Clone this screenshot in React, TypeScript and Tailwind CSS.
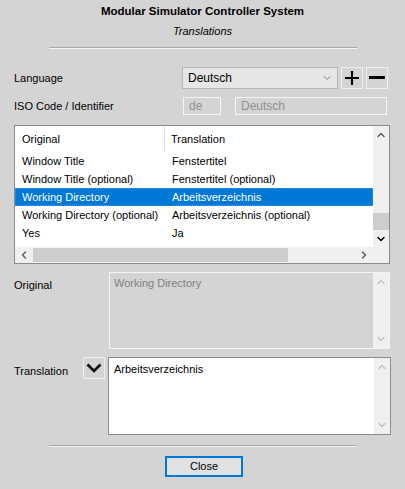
import { ChevronDown, ChevronUp, ChevronLeft, ChevronRight } from 'lucide-react'

const rows = [
  { original: 'Window Title', translation: 'Fenstertitel' },
  { original: 'Window Title (optional)', translation: 'Fenstertitel (optional)' },
  { original: 'Working Directory', translation: 'Arbeitsverzeichnis', selected: true },
  { original: 'Working Directory (optional)', translation: 'Arbeitsverzeichnis (optional)' },
  { original: 'Yes', translation: 'Ja' },
]

function Separator() {
  return <div className="mx-auto w-[308px] border-t border-[#a8a8a8] border-b border-b-[#f4f4f4]" />
}

function TextScroll() {
  return (
    <div className="flex w-[16px] flex-col items-center justify-between bg-[#f0f0f0] py-[3px]">
      <ChevronUp className="h-3 w-3 text-[#c0c0c0]" strokeWidth={2.5} />
      <ChevronDown className="h-3 w-3 text-[#c0c0c0]" strokeWidth={2.5} />
    </div>
  )
}

export default function App() {
  return (
    <div
      className="relative h-[489px] w-[405px] overflow-hidden bg-[#d4d4d4] text-[11px] text-black"
      style={{ fontFamily: '"Liberation Sans", Arial, sans-serif' }}
    >
      {/* Header */}
      <div className="pt-[4px] text-center text-[11.5px] font-bold leading-[14px]">Modular Simulator Controller System</div>
      <div className="mt-[6px] text-center italic leading-[14px]">Translations</div>
      <div className="mt-[9px]">
        <Separator />
      </div>

      {/* Language */}
      <div className="mt-[18px] flex h-[22px] items-center pl-[14px]">
        <span className="w-[168px]">Language</span>
        <div className="flex h-[22px] w-[156px] items-center justify-between border border-[#b8b8b8] bg-[#e6e6e6] pl-[5px] pr-[4px] text-[12px]">
          <span>Deutsch</span>
          <ChevronDown className="h-3 w-3 text-[#606060]" strokeWidth={1.5} />
        </div>
        <button className="ml-[3px] flex h-[22px] w-[22px] items-center justify-center border border-[#efefef] bg-[#d4d4d4]">
          <svg width="16" height="16" viewBox="0 0 16 16">
            <path d="M8 1v14M1 8h14" stroke="black" strokeWidth="2.2" />
          </svg>
        </button>
        <button className="ml-[3px] flex h-[22px] w-[22px] items-center justify-center border border-[#efefef] bg-[#d4d4d4]">
          <svg width="18" height="16" viewBox="0 0 18 16">
            <path d="M1 7.5h16" stroke="black" strokeWidth="3" />
          </svg>
        </button>
      </div>

      {/* ISO code */}
      <div className="mt-[8px] flex h-[18px] items-center pl-[14px]">
        <span className="w-[169px]">ISO Code / Identifier</span>
        <div className="flex h-[18px] w-[38px] items-center border border-[#f4f4f4] pl-[5px] text-[12px] text-[#909090]">de</div>
        <div className="ml-[14px] flex h-[18px] w-[152px] items-center border border-[#f4f4f4] pl-[5px] text-[12px] text-[#909090]">Deutsch</div>
      </div>

      {/* List */}
      <div className="ml-[14px] mt-[10px] flex h-[139px] w-[376px] flex-col border border-[#8c8c8c] bg-white">
        <div className="flex min-h-0 flex-1">
          <div className="flex-1 overflow-hidden">
            <div className="flex h-[26px] items-center">
              <div className="flex h-full w-[150px] items-center border-r border-[#e4e4e4] pl-[7px] pt-[1px]">Original</div>
              <div className="pl-[6px] pt-[1px]">Translation</div>
            </div>
            {rows.map((r) => (
              <div
                key={r.original}
                className={
                  r.selected
                    ? 'flex h-[18px] items-center bg-[#0078d7] text-white outline-1 outline-dotted outline-offset-[-1px] outline-[#3b93dc]'
                    : 'flex h-[18px] items-center'
                }
              >
                <div className="w-[150px] whitespace-nowrap pl-[7px]">{r.original}</div>
                <div className="whitespace-nowrap pl-[7px]">{r.translation}</div>
              </div>
            ))}
          </div>
          <div className="flex w-[16px] flex-col bg-[#f0f0f0]">
            <div className="flex h-[18px] items-center justify-center">
              <ChevronUp className="h-3 w-3 text-[#606060]" strokeWidth={3} />
            </div>
            <div className="flex-1" />
            <div className="h-[17px] bg-[#cdcdcd]" />
            <div className="flex h-[17px] items-center justify-center">
              <ChevronDown className="h-3 w-3 text-black" strokeWidth={3} />
            </div>
          </div>
        </div>
        <div className="flex h-[16px] items-center bg-[#f0f0f0] pr-[16px]">
          <div className="flex w-[18px] items-center justify-center">
            <ChevronLeft className="h-3 w-3 text-[#606060]" strokeWidth={3} />
          </div>
          <div className="h-[14px] w-[255px] bg-[#cdcdcd]" />
          <div className="flex-1" />
          <div className="flex w-[18px] items-center justify-center">
            <ChevronRight className="h-3 w-3 text-[#606060]" strokeWidth={3} />
          </div>
        </div>
      </div>

      {/* Original */}
      <div className="mt-[8px] flex pl-[14px]">
        <span className="w-[95px] pt-[5px]">Original</span>
        <div className="flex h-[77px] w-[281px] border border-[#f4f4f4]">
          <div className="flex-1 pl-[4px] pt-[2px] text-[#808080]">Working Directory</div>
          <TextScroll />
        </div>
      </div>

      {/* Translation */}
      <div className="mt-[8px] flex pl-[14px]">
        <span className="w-[69px] pt-[6px]">Translation</span>
        <button className="flex h-[22px] w-[22px] items-center justify-center border border-[#efefef] bg-[#d4d4d4]">
          <svg width="16" height="12" viewBox="0 0 16 12">
            <path d="M1.5 2.5 8 9l6.5-6.5" fill="none" stroke="black" strokeWidth="2.6" />
          </svg>
        </button>
        <div className="ml-[3px] flex h-[78px] w-[283px] border border-[#8c8c8c] bg-white">
          <div className="flex-1 pl-[5px] pt-[3px]">Arbeitsverzeichnis</div>
          <TextScroll />
        </div>
      </div>

      <div className="mt-[10px]">
        <Separator />
      </div>

      <div className="mt-[9px] flex justify-center">
        <button className="ml-[3px] h-[21px] w-[78px] border-2 border-[#0078d7] bg-[#e1e1e1] text-[11px]">Close</button>
      </div>
    </div>
  )
}
